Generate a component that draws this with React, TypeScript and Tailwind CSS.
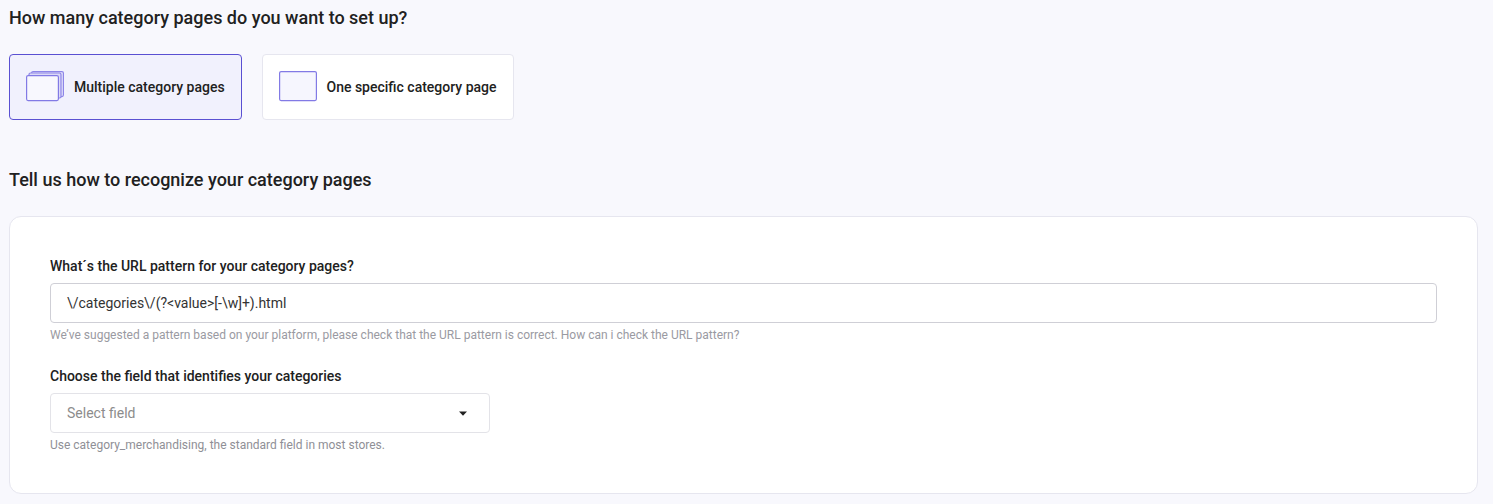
const FONT = "font-['Roboto',sans-serif]";

function StackIcon() {
  return (
    <svg width="38" height="32" viewBox="0 0 38 32" fill="none" className="shrink-0">
      <rect x="5.6" y="0.6" width="31.8" height="25" rx="1.5" fill="#e8e7fa" stroke="#8d85e8" strokeWidth="1.2" />
      <rect x="3" y="2" width="32" height="25" rx="1.5" fill="#dcdaf7" stroke="#8d85e8" strokeWidth="1.2" />
      <rect x="0.6" y="4.6" width="31.8" height="25" rx="1.5" fill="#f8f8fe" stroke="#827ae5" strokeWidth="1.2" />
    </svg>
  );
}

function SingleIcon() {
  return (
    <svg width="38" height="32" viewBox="0 0 38 32" fill="none" className="shrink-0">
      <rect x="0.6" y="0.6" width="36.8" height="29" rx="1.5" fill="#f6f6fe" stroke="#827ae5" strokeWidth="1.2" />
    </svg>
  );
}

export default function App() {
  return (
    <div className={`${FONT} h-[504px] w-[1493px] overflow-hidden bg-[#f8f8fd] px-[9px] text-[#212121]`}>
      <h2 className="pt-[7px] text-[18px] leading-[22px] font-medium">
        How many category pages do you want to set up?
      </h2>

      <div className="mt-[25px] flex gap-5">
        <button className="flex h-[66px] w-[233px] items-center gap-[10px] rounded border border-[#5a50d2] bg-[#f1f1fd] pl-4 text-sm font-medium">
          <StackIcon />
          Multiple category pages
        </button>
        <button className="flex h-[66px] w-[252px] items-center gap-[9.5px] rounded border border-[#e6e6ef] bg-white pl-4 text-sm font-medium">
          <SingleIcon />
          One specific category page
        </button>
      </div>

      <h2 className="mt-[49px] text-[18px] leading-[22px] font-medium">
        Tell us how to recognize your category pages
      </h2>

      <div className="mt-[25px] h-[278px] w-[1469px] rounded-xl border border-[#e6e6ef] bg-white pt-10 pl-10 pr-10">
        <label className="block text-sm leading-[18px] font-medium">
          What´s the URL pattern for your category pages?
        </label>
        <div className="mt-2 flex h-10 w-[1387px] items-center rounded border border-[#cfcfd6] bg-white pl-4 text-sm text-[#333333]">
          \/categories\/(?&lt;value&gt;[-\w]+).html
        </div>
        <p className="mt-[5px] text-xs leading-[14px] text-[#9a9aa2]">
          We’ve suggested a pattern based on your platform, please check that the URL pattern is correct. How can i check the URL pattern?
        </p>

        <label className="mt-[25px] block text-sm leading-[18px] font-medium">
          Choose the field that identifies your categories
        </label>
        <div className="mt-2 flex h-10 w-[440px] items-center justify-between rounded border border-[#e3e3e8] bg-white pr-[22px] pl-4 text-sm text-[#8c8c8c]">
          Select field
          <svg width="8" height="5" viewBox="0 0 8 5" className="shrink-0">
            <path d="M0 0.5h8L4 4.8z" fill="#212121" />
          </svg>
        </div>
        <p className="mt-[5px] text-xs leading-[14px] text-[#8f8f96]">
          Use category_merchandising, the standard field in most stores.
        </p>
      </div>
    </div>
  );
}
